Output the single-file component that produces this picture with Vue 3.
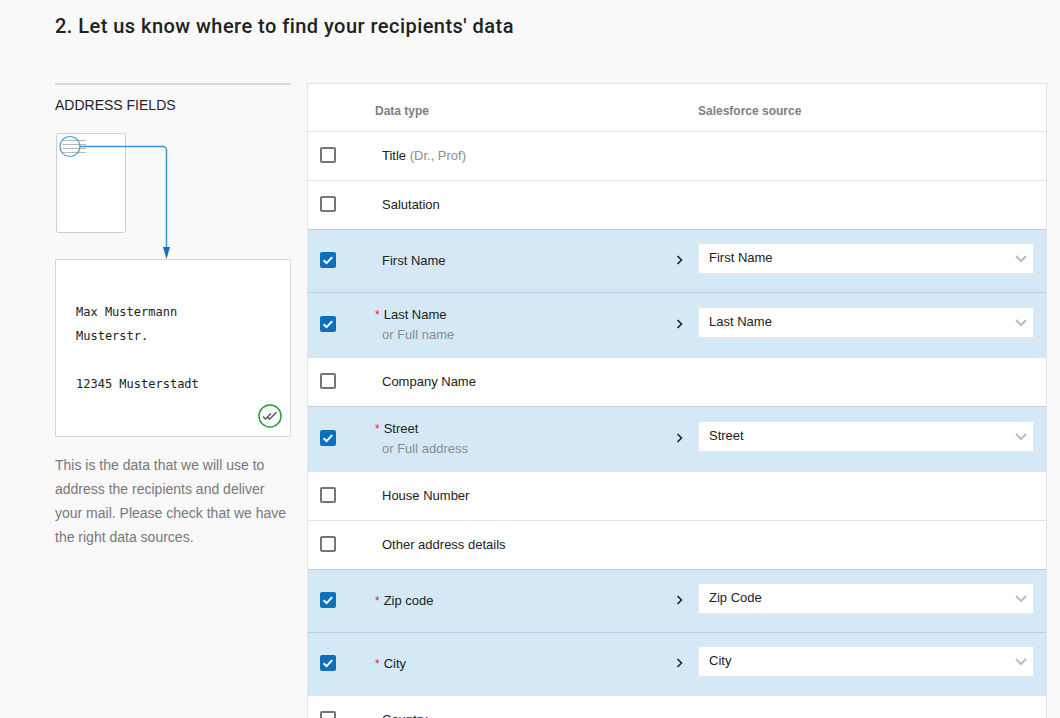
<script setup>
const rows = [
  { label: 'Title', hint: '(Dr., Prof)', h: 49 },
  { label: 'Salutation', h: 49 },
  { label: 'First Name', on: true, src: 'First Name', h: 63 },
  { label: 'Last Name', req: true, sub: 'or Full name', on: true, src: 'Last Name', h: 65 },
  { label: 'Company Name', h: 49 },
  { label: 'Street', req: true, sub: 'or Full address', on: true, src: 'Street', h: 65 },
  { label: 'House Number', h: 49 },
  { label: 'Other address details', h: 49 },
  { label: 'Zip code', req: true, on: true, src: 'Zip Code', h: 63 },
  { label: 'City', req: true, on: true, src: 'City', h: 63 },
  { label: 'Country', h: 49 }
]
</script>

<template>
  <div class="page">
    <h2 class="title">2. Let us know where to find your recipients' data</h2>
    <div class="columns">
      <aside class="side">
        <h3 class="side-head">ADDRESS FIELDS</h3>
        <svg class="diagram" width="236" height="126" viewBox="0 0 236 126">
          <rect x="1.5" y="0.5" width="69" height="99" rx="2" fill="#fff" stroke="#cfcfcf" />
          <g stroke="#b9b9b9" stroke-width="1">
            <line x1="7.5" y1="7.5" x2="31" y2="7.5" />
            <line x1="7.5" y1="11.5" x2="31" y2="11.5" />
            <line x1="7.5" y1="15.5" x2="31" y2="15.5" />
            <line x1="7.5" y1="19.5" x2="31" y2="19.5" />
          </g>
          <circle cx="15" cy="13.5" r="10" fill="none" stroke="#4a9bd6" stroke-width="1.2" />
          <path d="M25 13.5H108a3.5 3.5 0 0 1 3.5 3.5V116" fill="none" stroke="#3d94d2" stroke-width="1.5" />
          <path d="M108 114h7l-3.5 12z" fill="#0f6fba" />
        </svg>
        <div class="letter">
          <p>Max Mustermann</p>
          <p>Musterstr.</p>
          <p class="blank">&nbsp;</p>
          <p>12345 Musterstadt</p>
          <svg class="ok" width="24" height="24" viewBox="0 0 24 24">
            <circle cx="12" cy="12" r="11" fill="#fff" stroke="#2a9d35" stroke-width="1.5" />
            <path d="M5 12.5l2.5 2.5 5.5-5.5M9 12.5l2.5 2.8 7-7" fill="none" stroke="#555" stroke-width="1.4" />
          </svg>
        </div>
        <p class="help">This is the data that we will use to address the recipients and deliver your mail. Please check that we have the right data sources.</p>
      </aside>

      <section class="panel">
        <div class="head">
          <span class="head-type">Data type</span>
          <span>Salesforce source</span>
        </div>
        <div
          v-for="row in rows"
          :key="row.label"
          class="row"
          :class="{ on: row.on }"
          :style="{ height: row.h + 'px' }"
        >
          <span class="box" :class="{ checked: row.on }">
            <svg v-if="row.on" width="16" height="16" viewBox="0 0 16 16">
              <path d="M3.6 8.2l3 2.9 5.6-6" fill="none" stroke="#fff" stroke-width="2" />
            </svg>
          </span>
          <div class="label" :class="{ required: row.req }">
            <div class="main">
              <span v-if="row.req" class="star">*</span>{{ row.label }}
              <span v-if="row.hint" class="muted">{{ row.hint }}</span>
            </div>
            <div v-if="row.sub" class="sub muted">{{ row.sub }}</div>
          </div>
          <template v-if="row.src">
            <svg class="arrow" width="8" height="10" viewBox="0 0 8 10">
              <path d="M1.5 1l4 4-4 4" fill="none" stroke="#222" stroke-width="1.6" />
            </svg>
            <div class="select">
              <span>{{ row.src }}</span>
              <svg class="chevron" width="12" height="8" viewBox="0 0 12 8">
                <path d="M1 1l5 5 5-5" fill="none" stroke="#bdbdbd" stroke-width="2" />
              </svg>
            </div>
          </template>
        </div>
      </section>
    </div>
  </div>
</template>

<style>
html, body { margin: 0; background: #f9f9f9; overflow: hidden; }
</style>

<style scoped>
.page {
  height: 718px;
  overflow: hidden;
  background: #f9f9f9;
  padding-left: 55px;
  font-family: "Liberation Sans", Arial, sans-serif;
  color: #222;
}
.title {
  margin: 0;
  padding-top: 13px;
  height: 83px;
  box-sizing: border-box;
  font-family: Roboto, sans-serif;
  font-weight: 500;
  font-size: 20px;
  letter-spacing: 0.46px;
  line-height: 26px;
  color: #222;
}
.columns { display: flex; gap: 16px; align-items: flex-start; }
.side { width: 236px; flex: none; }
.side-head {
  margin: 0;
  border-top: 2px solid #d9d9d9;
  padding-top: 12px;
  height: 48px;
  box-sizing: border-box;
  font-weight: 400;
  font-size: 14px;
  line-height: 16px;
  color: #222;
}
.diagram { display: block; margin-top: 2px; }
.letter {
  position: relative;
  box-sizing: border-box;
  height: 178px;
  background: #fff;
  border: 1px solid #d9d9d9;
  padding-top: 40px;
  padding-left: 20px;
  font-family: "DejaVu Sans Mono", monospace;
  font-size: 12px;
  line-height: 24px;
}
.letter p { margin: 0; }
.ok { position: absolute; right: 8px; bottom: 8px; }
.help {
  margin: 16px 0 0;
  font-size: 14px;
  line-height: 24px;
  color: #777;
}
.panel {
  width: 740px;
  flex: none;
  box-sizing: border-box;
  background: #fff;
  border: 1px solid #e3e3e3;
}
.head {
  display: flex;
  height: 47px;
  align-items: center;
  padding-top: 6px;
  box-sizing: border-box;
  padding-left: 67px;
  font-size: 12px;
  font-weight: 700;
  color: #808080;
}
.head-type { width: 323px; }
.row {
  display: flex;
  align-items: center;
  box-sizing: border-box;
  padding-left: 12px;
  border-top: 1px solid #e3e3e3;
  font-size: 13px;
}
.row.on { background: #d4e8f6; border-top-color: #b9cfdf; }
.box {
  flex: none;
  width: 16px;
  height: 16px;
  margin-top: -2px;
  box-sizing: border-box;
  border: 2px solid #757575;
  border-radius: 2px;
  background: #fff;
}
.box.checked { background: #0f6fba; border: 0; }
.box svg { display: block; }
.label { width: 337px; flex: none; padding-left: 46px; box-sizing: border-box; line-height: 20px; }
.label.required { padding-left: 39px; }
.star { color: #f0242e; margin-right: 4px; font-size: 12px; }
.muted { color: #8c8c8c; }
.sub { padding-left: 7px; }
.arrow { flex: none; margin-left: 3px; margin-top: -2px; }
.select {
  flex: none;
  box-sizing: border-box;
  width: 336px;
  height: 31px;
  margin-left: 14px;
  margin-top: -5px;
  padding: 0 6px 3px 10px;
  display: flex;
  align-items: center;
  justify-content: space-between;
  background: #fff;
  border: 1px solid #e4e9ed;
}
.chevron { margin-top: 3px; }
</style>
